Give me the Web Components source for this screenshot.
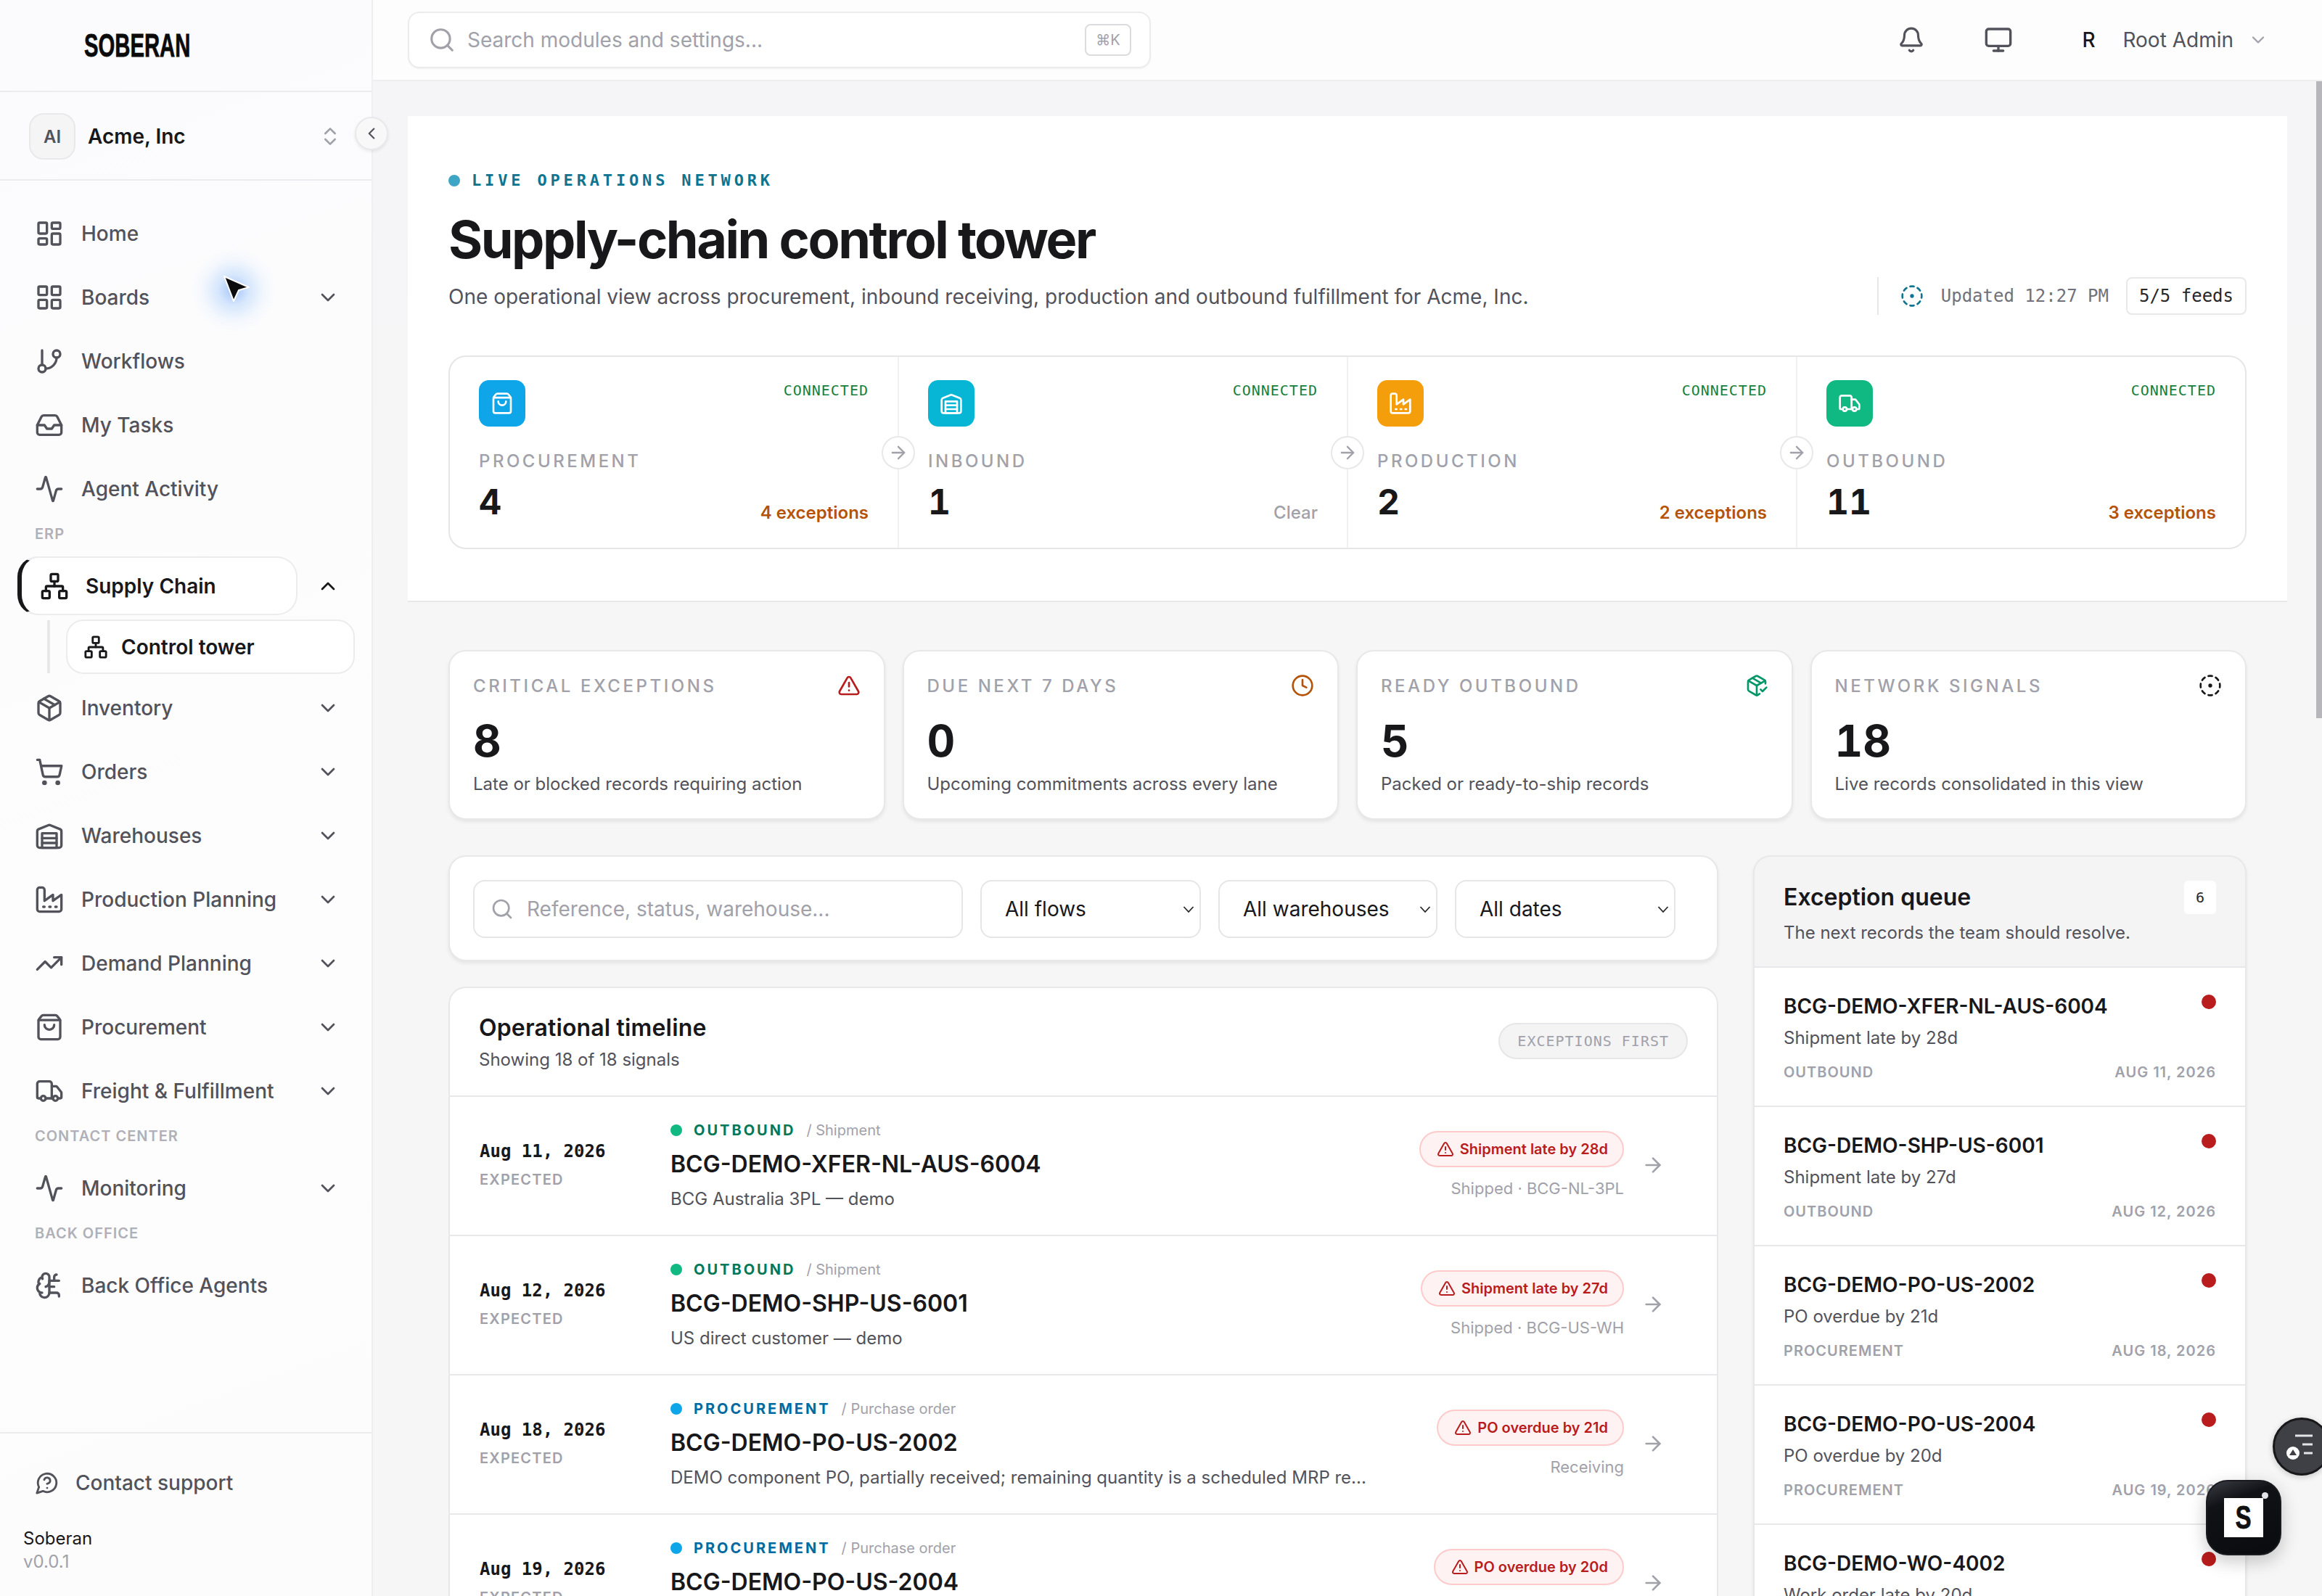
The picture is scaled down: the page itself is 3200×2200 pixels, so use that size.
<!doctype html>
<html lang="en"><head><meta charset="utf-8"><title>Supply-chain control tower</title>
<style>
html,body{margin:0;padding:0;height:2200px;overflow:hidden;background:#f6f6f7;font-family:Inter,"Liberation Sans",sans-serif;color:#18181b}
</style></head><body>
<app-root></app-root>
<script>
const I={
dash:'<rect x="3" y="3" width="7" height="9" rx="1"/><rect x="14" y="3" width="7" height="5" rx="1"/><rect x="14" y="12" width="7" height="9" rx="1"/><rect x="3" y="16" width="7" height="5" rx="1"/>',
grid:'<rect x="3" y="3" width="7" height="7" rx="1"/><rect x="14" y="3" width="7" height="7" rx="1"/><rect x="14" y="14" width="7" height="7" rx="1"/><rect x="3" y="14" width="7" height="7" rx="1"/>',
branch:'<line x1="6" y1="3" x2="6" y2="15"/><circle cx="18" cy="6" r="3"/><circle cx="6" cy="18" r="3"/><path d="M18 9a9 9 0 0 1-9 9"/>',
inbox:'<polyline points="22 12 16 12 14 15 10 15 8 12 2 12"/><path d="M5.45 5.11 2 12v6a2 2 0 0 0 2 2h16a2 2 0 0 0 2-2v-6l-3.45-6.89A2 2 0 0 0 16.76 4H7.24a2 2 0 0 0-1.79 1.11z"/>',
activity:'<path d="M22 12h-2.48a2 2 0 0 0-1.93 1.46l-2.35 8.36a.25.25 0 0 1-.48 0L9.24 2.18a.25.25 0 0 0-.48 0l-2.35 8.36A2 2 0 0 1 4.49 12H2"/>',
network:'<rect x="16" y="16" width="6" height="6" rx="1"/><rect x="2" y="16" width="6" height="6" rx="1"/><rect x="9" y="2" width="6" height="6" rx="1"/><path d="M5 16v-3a1 1 0 0 1 1-1h12a1 1 0 0 1 1 1v3"/><path d="M12 12V8"/>',
package:'<path d="M11 21.73a2 2 0 0 0 2 0l7-4A2 2 0 0 0 21 16V8a2 2 0 0 0-1-1.73l-7-4a2 2 0 0 0-2 0l-7 4A2 2 0 0 0 3 8v8a2 2 0 0 0 1 1.73z"/><path d="M12 22V12"/><polyline points="3.29 7 12 12 20.71 7"/><path d="m7.5 4.27 9 5.15"/>',
cart:'<circle cx="8" cy="21" r="1"/><circle cx="19" cy="21" r="1"/><path d="M2.05 2.05h2l2.66 12.42a2 2 0 0 0 2 1.58h9.78a2 2 0 0 0 1.95-1.57l1.65-7.43H5.12"/>',
warehouse:'<path d="M22 8.35V20a2 2 0 0 1-2 2H4a2 2 0 0 1-2-2V8.35A2 2 0 0 1 3.26 6.5l8-3.2a2 2 0 0 1 1.48 0l8 3.2A2 2 0 0 1 22 8.35Z"/><path d="M6 18h12"/><path d="M6 14h12"/><rect x="6" y="10" width="12" height="12"/>',
factory:'<path d="M2 20a2 2 0 0 0 2 2h16a2 2 0 0 0 2-2V8l-7 5V8l-7 5V4a2 2 0 0 0-2-2H4a2 2 0 0 0-2 2Z"/><path d="M17 18h1"/><path d="M12 18h1"/><path d="M7 18h1"/>',
trend:'<polyline points="22 7 13.5 15.5 8.5 10.5 2 17"/><polyline points="16 7 22 7 22 13"/>',
bag:'<path d="M16 10a4 4 0 0 1-8 0"/><path d="M3.103 6.034h17.794"/><path d="M3.4 5.467a2 2 0 0 0-.4 1.2V20a2 2 0 0 0 2 2h14a2 2 0 0 0 2-2V6.667a2 2 0 0 0-.4-1.2l-2-2.667A2 2 0 0 0 17 2H7a2 2 0 0 0-1.6.8z"/>',
truck:'<path d="M14 18V6a2 2 0 0 0-2-2H4a2 2 0 0 0-2 2v11a1 1 0 0 0 1 1h2"/><path d="M15 18H9"/><path d="M19 18h2a1 1 0 0 0 1-1v-3.65a1 1 0 0 0-.22-.624l-3.48-4.35A1 1 0 0 0 17.52 8H14"/><circle cx="17" cy="18" r="2"/><circle cx="7" cy="18" r="2"/>',
brain:'<path d="M12 5a3 3 0 1 0-5.997.125 4 4 0 0 0-2.526 5.77 4 4 0 0 0 .556 6.588A4 4 0 1 0 12 18Z"/><path d="M9 13a4.5 4.5 0 0 0 3-4"/><path d="M6.003 5.125A3 3 0 0 0 6.401 6.5"/><path d="M3.477 10.896a4 4 0 0 1 .585-.396"/><path d="M6 18a4 4 0 0 1-1.967-.516"/><path d="M12 13h4"/><path d="M12 18h6a2 2 0 0 1 2 2v1"/><path d="M12 8h8"/><path d="M16 8V5a2 2 0 0 1 2-2"/>',
help:'<path d="M7.9 20A9 9 0 1 0 4 16.1L2 22Z"/><path d="M9.09 9a3 3 0 0 1 5.83 1c0 2-3 3-3 3"/><path d="M12 17h.01"/>',
updown:'<path d="m7 15 5 5 5-5"/><path d="m7 9 5-5 5 5"/>',
down:'<path d="m6 9 6 6 6-6"/>',up:'<path d="m18 15-6-6-6 6"/>',left:'<path d="m15 18-6-6 6-6"/>',
search:'<circle cx="11" cy="11" r="8"/><path d="m21 21-4.3-4.3"/>',
bell:'<path d="M10.268 21a2 2 0 0 0 3.464 0"/><path d="M3.262 15.326A1 1 0 0 0 4 17h16a1 1 0 0 0 .74-1.673C19.41 13.956 18 12.499 18 8A6 6 0 0 0 6 8c0 4.499-1.411 5.956-2.738 7.326"/>',
monitor:'<rect x="2" y="3" width="20" height="14" rx="2"/><line x1="8" y1="21" x2="16" y2="21"/><line x1="12" y1="17" x2="12" y2="21"/>',
dashed:'<path d="M10.1 2.18a9.93 9.93 0 0 1 3.8 0"/><path d="M17.6 3.71a9.95 9.95 0 0 1 2.69 2.7"/><path d="M21.82 10.1a9.93 9.93 0 0 1 0 3.8"/><path d="M20.29 17.6a9.95 9.95 0 0 1-2.7 2.69"/><path d="M13.9 21.82a9.94 9.94 0 0 1-3.8 0"/><path d="M6.4 20.29a9.95 9.95 0 0 1-2.69-2.7"/><path d="M2.18 13.9a9.93 9.93 0 0 1 0-3.8"/><path d="M3.71 6.4a9.95 9.95 0 0 1 2.7-2.69"/><circle cx="12" cy="12" r="1"/>',
alert:'<path d="m21.73 18-8-14a2 2 0 0 0-3.48 0l-8 14A2 2 0 0 0 4 21h16a2 2 0 0 0 1.73-3"/><path d="M12 9v4"/><path d="M12 17h.01"/>',
clock:'<circle cx="12" cy="12" r="10"/><polyline points="12 6 12 12 16 14"/>',
pcheck:'<path d="m16 16 2 2 4-4"/><path d="M21 10V8a2 2 0 0 0-1-1.73l-7-4a2 2 0 0 0-2 0l-7 4A2 2 0 0 0 3 8v8a2 2 0 0 0 1 1.73l7 4a2 2 0 0 0 2 0l2-1.14"/><path d="m7.5 4.27 9 5.15"/><polyline points="3.29 7 12 12 20.71 7"/><line x1="12" y1="22" x2="12" y2="12"/>',
arrow:'<path d="M5 12h14"/><path d="m12 5 7 7-7 7"/>'
};
const ic=(n,s=40,c='currentColor',w=2)=>`<svg xmlns="http://www.w3.org/2000/svg" width="${s}" height="${s}" viewBox="0 0 24 24" fill="none" stroke="${c}" stroke-width="${w}" stroke-linecap="round" stroke-linejoin="round" style="flex:none;display:block">${I[n]}</svg>`;
const MONO='"DejaVu Sans Mono","Liberation Mono",monospace';
const def=(tag,css,render)=>customElements.define(tag,class extends HTMLElement{connectedCallback(){if(this.shadowRoot)return;const r=this.attachShadow({mode:'open'});r.innerHTML=`<style>${css}</style>`+render(this)}});
const a=(e,k,d='')=>e.getAttribute(k)??d;

def('nav-item',`
:host{display:flex;align-items:center;height:88px;padding-left:48px;padding-right:44px;color:#52525b;font-size:28px;font-weight:500}
span{margin-left:24px;flex:1;white-space:nowrap}
`,e=>`${ic(a(e,'icon'))}<span><slot></slot></span>${e.hasAttribute('more')?ic('down',32):''}`);

def('nav-label',`
:host{display:flex;align-items:center;height:36px;margin-bottom:10px;padding-left:48px;color:#b0b0b8;font-size:20px;font-weight:600;letter-spacing:1px;white-space:nowrap}
`,()=>`<slot></slot>`);

def('nav-active',`
:host{display:block;margin-top:13px}
.row{display:flex;align-items:center;height:81px;padding-right:44px}
.pill{box-sizing:border-box;width:386px;margin-left:24px;height:81px;display:flex;align-items:center;padding-left:25px;background:#fff;border:2px solid #ececee;border-left:6px solid #18181b;border-radius:28px;font-size:28px;font-weight:600;color:#18181b;white-space:nowrap}
.pill span{margin-left:23px}
.ch{margin-left:26px;color:#18181b}
.sub{display:flex;margin-top:6px;height:75px;margin-bottom:3px;padding-left:65px}
.line{width:4px;background:#e8e8ea;height:73px;margin-top:1px}
.c{box-sizing:border-box;margin-left:22px;width:398px;height:75px;display:flex;align-items:center;padding-left:22px;background:#fff;border:2px solid #ececee;border-radius:24px;font-size:28px;font-weight:600;color:#18181b;white-space:nowrap}
.c span{margin-left:18px}
`,()=>`<div class="row"><div class="pill">${ic('network',40)}<span>Supply Chain</span></div><div class="ch">${ic('up',32)}</div></div>
<div class="sub"><div class="line"></div><div class="c">${ic('network',34)}<span>Control tower</span></div></div>`);

def('side-bar',`
:host{position:relative;box-sizing:border-box;flex:none;width:514px;height:2200px;display:flex;flex-direction:column;background:linear-gradient(160deg,#fbfbfd,#fdfdfd 60%,#fcfcfc);border-right:2px solid #efeff1;z-index:3}
.logo{box-sizing:border-box;border-bottom:2px solid #ececee;height:127px;padding-left:116px;display:flex;align-items:center;padding-bottom:1px}
.logo b{font-family:"Liberation Sans",sans-serif;font-size:45px;font-weight:700;color:#0b0b0c;-webkit-text-stroke:.8px #0b0b0c;display:inline-block;line-height:1;transform:scaleX(.65);transform-origin:left center;white-space:nowrap}
.org{box-sizing:border-box;height:122px;border-bottom:2px solid #ececee;display:flex;align-items:center;padding-left:40px;padding-right:41px;padding-top:2px}
.av{box-sizing:border-box;width:64px;height:64px;border:2px solid #e9e9eb;background:#f5f5f6;border-radius:20px;display:flex;align-items:center;justify-content:center;font-size:24px;font-weight:600;color:#52525b}
.org span{margin-left:17px;flex:1;font-size:28px;font-weight:600;color:#18181b}
.collapse{position:absolute;left:489px;top:161px;box-sizing:border-box;width:46px;height:46px;border-radius:50%;background:#f8f8f9;border:2px solid #e9e9eb;box-shadow:0 2px 4px rgba(0,0,0,.08);display:flex;align-items:center;justify-content:center;color:#52525b}
nav{flex:1;padding-top:29px}
footer{height:226px;box-sizing:border-box;border-top:2px solid #ececee;padding:49px 0 0 32px}
.sup{display:flex;align-items:center;height:38px;color:#52525b;font-size:28px;font-weight:500;padding-left:16px}
.sup span{margin-left:22px}
.brand{font-size:24px;color:#18181b;margin-top:42px;line-height:32px}
.ver{font-size:24px;color:#a1a1aa;line-height:32px}
.cursor{position:absolute;left:262px;top:340px;width:120px;height:120px;border-radius:50%;background:radial-gradient(circle,rgba(59,130,246,.45) 0,rgba(96,165,250,.24) 25%,rgba(147,197,253,.08) 50%,transparent 68%)}
.cursor svg{position:absolute;left:45px;top:39px}
`,()=>`<div class="logo"><b>SOBERAN</b></div>
<div class="org"><div class="av">AI</div><span>Acme, Inc</span>${ic('updown',32,'#a1a1aa')}</div>
<div class="collapse">${ic('left',26)}</div>
<nav>
<nav-item icon="dash">Home</nav-item><nav-item icon="grid" more>Boards</nav-item><nav-item icon="branch">Workflows</nav-item><nav-item icon="inbox">My Tasks</nav-item><nav-item icon="activity">Agent Activity</nav-item>
<nav-label>ERP</nav-label><nav-active></nav-active>
<nav-item icon="package" more>Inventory</nav-item><nav-item icon="cart" more>Orders</nav-item><nav-item icon="warehouse" more>Warehouses</nav-item><nav-item icon="factory" more>Production Planning</nav-item><nav-item icon="trend" more>Demand Planning</nav-item><nav-item icon="bag" more>Procurement</nav-item><nav-item icon="truck" more>Freight &amp; Fulfillment</nav-item>
<nav-label>CONTACT CENTER</nav-label><nav-item icon="activity" more>Monitoring</nav-item>
<nav-label>BACK OFFICE</nav-label><nav-item icon="brain">Back Office Agents</nav-item>
</nav>
<footer><div class="sup">${ic('help',34)}<span>Contact support</span></div><div class="brand">Soberan</div><div class="ver">v0.0.1</div></footer>
<div class="cursor"><svg width="38" height="38" viewBox="0 0 38 38"><path d="M2 2 36 17 22 21 15 36Z" fill="#0c0c0e" stroke="#fff" stroke-width="2" stroke-linejoin="round"/></svg></div>`);

def('top-bar',`
:host{box-sizing:border-box;flex:none;height:112px;display:flex;align-items:center;background:#fdfdfe;border-bottom:2px solid #eeeef0;padding-left:48px;padding-bottom:1px;box-shadow:0 2px 6px rgba(0,0,0,.02)}
.s{box-sizing:border-box;width:1024px;height:78px;border:2px solid #ececee;border-radius:16px;background:#fff;box-shadow:0 1px 2px rgba(0,0,0,.05);display:flex;align-items:center;padding-left:26px;color:#a1a1aa;font-size:28px}
.s span{margin-left:16px;flex:1}
kbd{box-sizing:border-box;width:64px;height:44px;margin-right:25px;border:2px solid #dcdce0;border-radius:8px;display:flex;align-items:center;justify-content:center;font:400 20px Inter,sans-serif;color:#a1a1aa;background:#fff}
.r{margin-left:auto;display:flex;align-items:center;color:#52525b;font-size:28px}
.bell{margin-right:81px}.mon{margin-right:95px}
.R{color:#18181b;font-weight:500;width:56px;text-align:left}
.n{margin-right:20px;white-space:nowrap}
`,()=>`<div class="s">${ic('search',38)}<span>Search modules and settings...</span><kbd>⌘K</kbd></div>
<div class="r"><div class="bell">${ic('bell',38)}</div><div class="mon">${ic('monitor',40)}</div><div class="R">R</div><div class="n">Root Admin</div>${ic('down',28,'#a1a1aa')}<div style="width:74px"></div></div>`);

def('pipe-step',`
:host{position:relative;box-sizing:border-box;flex:1 1 0;padding:32px 40px 0;height:263px;border-right:2px solid #f1f1f3;min-width:0}
:host([last]){border-right:0}
.top{display:flex;justify-content:space-between}
.i{width:64px;height:64px;border-radius:14px;display:flex;align-items:center;justify-content:center}
.c{font:400 20px/28px ${MONO};letter-spacing:1px;color:#15803d}
.l{margin-top:33px;font-size:24px;line-height:30px;font-weight:500;letter-spacing:3.5px;color:#a1a1aa}
.b{margin-top:13px;display:flex;justify-content:space-between;align-items:flex-end}
.n{font-size:48px;line-height:56px;font-weight:700;color:#18181b;font-variant-numeric:tabular-nums;font-feature-settings:"tnum"}
.e{font-size:24px;line-height:30px;font-weight:600;margin-bottom:-2px}
.clear{font-weight:500}
.ar{position:absolute;right:-24px;top:109px;box-sizing:border-box;width:46px;height:46px;border-radius:50%;background:#fff;border:2px solid #e8e8ea;display:flex;align-items:center;justify-content:center;z-index:1}
`,e=>`<div class="top"><div class="i" style="background:${a(e,'color')}">${ic(a(e,'icon'),32,'#fff')}</div><div class="c">CONNECTED</div></div>
<div class="l">${a(e,'label')}</div>
<div class="b"><div class="n">${a(e,'num')}</div><div class="e ${a(e,'note')==='Clear'?'clear':''}" style="color:${a(e,'note')==='Clear'?'#a1a1aa':'#b45309'}">${a(e,'note')}</div></div>
${e.hasAttribute('last')?'':`<div class="ar">${ic('arrow',28,'#a1a1aa')}</div>`}`);

def('hero-panel',`
:host{display:block;box-sizing:border-box;background:#fff;border-bottom:2px solid #e8e8ea;height:670px;padding:75px 56px 0}
.live{display:flex;align-items:center;font:700 22px/28px ${MONO};letter-spacing:4.84px;color:#0e7490;white-space:nowrap}
.dot{width:16px;height:16px;border-radius:50%;background:#3ea5c4;margin-right:16px}
h1{margin:27px 0 0;font-size:72px;line-height:80px;font-weight:700;letter-spacing:-2.46px;color:#18181b}
.row{display:flex;justify-content:space-between;align-items:center;margin-top:12px;height:52px}
p{margin:0;padding-top:2px;font-size:28px;line-height:40px;color:#52525b}
.m{display:flex;align-items:center;font:400 24px/32px ${MONO};color:#71717a}
.d{width:2px;height:52px;background:#e8e8ea;margin-right:30px}
.m span{margin-left:24px}
.chip{box-sizing:border-box;height:52px;margin-left:24px;padding:0 16px;border:2px solid #e8e8ea;border-radius:8px;display:flex;align-items:center;color:#27272a}
.pipe{margin-top:56px;box-sizing:border-box;height:267px;border:2px solid #e6e6e8;border-radius:24px;display:flex}
`,()=>`<div class="live"><i class="dot"></i>LIVE OPERATIONS NETWORK</div>
<h1>Supply-chain control tower</h1>
<div class="row"><p>One operational view across procurement, inbound receiving, production and outbound fulfillment for Acme, Inc.</p>
<div class="m"><i class="d"></i>${ic('dashed',32,'#0e7490')}<span>Updated 12:27 PM</span><div class="chip">5/5 feeds</div></div></div>
<div class="pipe">
<pipe-step color="#0ea5e9" icon="bag" label="PROCUREMENT" num="4" note="4 exceptions"></pipe-step>
<pipe-step color="#06b6d4" icon="warehouse" label="INBOUND" num="1" note="Clear"></pipe-step>
<pipe-step color="#f59e0b" icon="factory" label="PRODUCTION" num="2" note="2 exceptions"></pipe-step>
<pipe-step color="#10b981" icon="truck" label="OUTBOUND" num="11" note="3 exceptions" last></pipe-step>
</div>`);

def('kpi-card',`
:host{display:block;box-sizing:border-box;height:234px;background:#fff;border:2px solid #e8e8ea;border-radius:24px;padding:32px 32px 0;box-shadow:0 3px 5px rgba(0,0,0,.07);min-width:0}
.t{display:flex;justify-content:space-between;align-items:center;height:30px}
.l{font-size:24px;font-weight:500;letter-spacing:3.55px;color:#a1a1aa;white-space:nowrap}
.n{margin-top:25px;font-size:60px;line-height:72px;font-weight:700;color:#18181b;font-variant-numeric:tabular-nums;font-feature-settings:"tnum"}
.d{margin-top:6px;font-size:24px;line-height:36px;color:#52525b;white-space:nowrap}
`,e=>`<div class="t"><div class="l">${a(e,'label')}</div>${ic(a(e,'icon'),32,a(e,'color'))}</div><div class="n">${a(e,'num')}</div><div class="d">${a(e,'desc')}</div>`);

def('filter-select',`
:host{box-sizing:border-box;height:80px;display:flex;align-items:center;border:2px solid #e6e6e8;border-radius:16px;padding:0 6px 0 32px;font-size:28px;color:#18181b;white-space:nowrap;background:#fff}
span{flex:1}
`,()=>`<span><slot></slot></span><svg width="18" height="18" viewBox="0 0 18 18" fill="none" stroke="#27272a" stroke-width="1.8" style="flex:none"><path d="m2.5 6 6.5 7 6.5-7"/></svg>`);

def('filter-bar',`
:host{display:flex;box-sizing:border-box;height:146px;align-items:center;gap:24px;padding:1px 32px 0;background:#fff;border:2px solid #e8e8ea;border-radius:24px;box-shadow:0 3px 5px rgba(0,0,0,.07)}
.in{box-sizing:border-box;width:675px;height:80px;border:2px solid #e6e6e8;border-radius:16px;display:flex;align-items:center;padding-left:22px;color:#a1a1aa;font-size:28px;white-space:nowrap}
.in span{margin-left:18px}
`,()=>`<div class="in">${ic('search',32)}<span>Reference, status, warehouse...</span></div>
<filter-select style="width:304px">All flows</filter-select><filter-select style="width:302px">All warehouses</filter-select><filter-select style="width:304px">All dates</filter-select>`);

def('time-row',`
:host{display:flex;box-sizing:border-box;height:192px;border-bottom:2px solid #e8e8ea;padding-left:41px;padding-right:72px}
.date{width:263px;flex:none;padding-top:60px}
.dv{font:700 24px/30px ${MONO};color:#18181b;white-space:nowrap}
.ex{margin-top:11px;font-size:20px;line-height:26px;font-weight:600;letter-spacing:1.2px;color:#a1a1aa}
.main{flex:1;padding-top:31px;min-width:0}
.top{display:flex;align-items:center;height:30px;white-space:nowrap}
.top i{width:16px;height:16px;border-radius:50%;margin-right:16px}
.fl{font:700 20px/30px Inter,sans-serif;letter-spacing:3px}
.ty{font-size:20px;color:#a1a1aa;margin-left:15px}
.ti{margin-top:10px;font-size:32px;line-height:44px;font-weight:600;color:#18181b;white-space:nowrap}
.sb{margin-top:10px;font-size:24px;line-height:32px;color:#52525b;white-space:nowrap}
.r{flex:none;display:flex;flex-direction:column;align-items:flex-end;padding-top:47px}
.bd{box-sizing:border-box;height:50px;border:2px solid #fecaca;background:#fef2f2;border-radius:25px;display:flex;align-items:center;padding:0 20px 0 22px;font-size:20px;font-weight:600;color:#b91c1c;white-space:nowrap}
.bd span{margin-left:8px}
.mt{margin-top:14px;font-size:22px;line-height:30px;color:#a1a1aa;white-space:nowrap}
.go{flex:none;margin-left:24px;margin-top:78px}
`,e=>`<div class="date"><div class="dv">${a(e,'date')}</div><div class="ex">EXPECTED</div></div>
<div class="main"><div class="top"><i style="background:${a(e,'dot')}"></i><span class="fl" style="color:${a(e,'fc')}">${a(e,'flow')}</span><span class="ty">/ ${a(e,'type')}</span></div>
<div class="ti">${a(e,'ref')}</div>${a(e,'sub')?`<div class="sb">${a(e,'sub')}</div>`:''}</div>
<div class="r"><div class="bd">${ic('alert',24)}<span>${a(e,'bad')}</span></div>${a(e,'meta')?`<div class="mt">${a(e,'meta')}</div>`:''}</div>
<div class="go">${ic('arrow',32,'#a1a1aa')}</div>`);

def('time-line',`
:host{display:block;margin-top:35px;background:#fff;border:2px solid #e8e8ea;border-bottom:0;border-radius:24px 24px 0 0;overflow:hidden}
.h{box-sizing:border-box;height:150px;border-bottom:2px solid #e8e8ea;padding:0 40px 0 40px;display:flex;justify-content:space-between;align-items:flex-start}
h2{margin:34px 0 0;font-size:32px;line-height:42px;font-weight:600;color:#18181b;letter-spacing:.15px}
.h p{margin:6px 0 0;font-size:24px;line-height:34px;color:#52525b}
.ch{margin-top:48px;box-sizing:border-box;height:50px;padding:0 24px;border:2px solid #e6e6e8;background:#f4f4f5;border-radius:25px;display:flex;align-items:center;font:500 20px ${MONO};letter-spacing:1px;color:#a1a1aa;white-space:nowrap}
`,()=>`<div class="h"><div><h2>Operational timeline</h2><p>Showing 18 of 18 signals</p></div><div class="ch">EXCEPTIONS FIRST</div></div>
<time-row date="Aug 11, 2026" dot="#10b981" fc="#047857" flow="OUTBOUND" type="Shipment" ref="BCG-DEMO-XFER-NL-AUS-6004" sub="BCG Australia 3PL — demo" bad="Shipment late by 28d" meta="Shipped · BCG-NL-3PL"></time-row>
<time-row date="Aug 12, 2026" dot="#10b981" fc="#047857" flow="OUTBOUND" type="Shipment" ref="BCG-DEMO-SHP-US-6001" sub="US direct customer — demo" bad="Shipment late by 27d" meta="Shipped · BCG-US-WH"></time-row>
<time-row date="Aug 18, 2026" dot="#0ea5e9" fc="#0369a1" flow="PROCUREMENT" type="Purchase order" ref="BCG-DEMO-PO-US-2002" sub="DEMO component PO, partially received; remaining quantity is a scheduled MRP re..." bad="PO overdue by 21d" meta="Receiving"></time-row>
<time-row date="Aug 19, 2026" dot="#0ea5e9" fc="#0369a1" flow="PROCUREMENT" type="Purchase order" ref="BCG-DEMO-PO-US-2004" bad="PO overdue by 20d"></time-row>`);

def('queue-row',`
:host{display:block;box-sizing:border-box;height:192px;border-bottom:2px solid #e8e8ea;background:#fff;padding:33px 40px 0 40px}
.t{display:flex;justify-content:space-between}
.ti{font-size:28px;line-height:40px;font-weight:600;color:#18181b;white-space:nowrap}
.t i{width:20px;height:20px;border-radius:50%;background:#b91c1c;margin-top:4px}
.s{margin-top:8px;font-size:24px;line-height:32px;color:#52525b}
.m{margin-top:18px;display:flex;justify-content:space-between;font-size:20px;line-height:26px;font-weight:600;letter-spacing:1px;color:#a1a1aa}
`,e=>`<div class="t"><div class="ti">${a(e,'ref')}</div><i></i></div><div class="s">${a(e,'sub')}</div>${a(e,'flow')?`<div class="m"><span>${a(e,'flow')}</span><span>${a(e,'date')}</span></div>`:''}`);

def('queue-panel',`
:host{display:block;box-sizing:border-box;background:#f4f4f5;border:2px solid #e8e8ea;border-bottom:0;border-radius:24px 24px 0 0;box-shadow:0 3px 5px rgba(0,0,0,.07);overflow:hidden}
.h{box-sizing:border-box;height:153px;border-bottom:2px solid #e8e8ea;padding:33px 40px 0;position:relative}
h2{margin:0;font-size:32px;line-height:46px;font-weight:600;color:#18181b}
p{margin:4px 0 0;font-size:24px;line-height:44px;color:#52525b}
.c{position:absolute;right:40px;top:33px;width:44px;height:46px;background:#fff;border-radius:6px;display:flex;align-items:center;justify-content:center;font:400 20px ${MONO};color:#27272a}
`,()=>`<div class="h"><h2>Exception queue</h2><p>The next records the team should resolve.</p><div class="c">6</div></div>
<queue-row ref="BCG-DEMO-XFER-NL-AUS-6004" sub="Shipment late by 28d" flow="OUTBOUND" date="AUG 11, 2026"></queue-row>
<queue-row ref="BCG-DEMO-SHP-US-6001" sub="Shipment late by 27d" flow="OUTBOUND" date="AUG 12, 2026"></queue-row>
<queue-row ref="BCG-DEMO-PO-US-2002" sub="PO overdue by 21d" flow="PROCUREMENT" date="AUG 18, 2026"></queue-row>
<queue-row ref="BCG-DEMO-PO-US-2004" sub="PO overdue by 20d" flow="PROCUREMENT" date="AUG 19, 2026"></queue-row>
<queue-row ref="BCG-DEMO-WO-4002" sub="Work order late by 20d"></queue-row>`);

def('float-tools',`
:host{position:absolute;left:0;top:0;width:0;height:0;z-index:5}
.a{position:absolute;left:3132px;top:1954px;box-sizing:border-box;width:80px;height:80px;border-radius:50%;background:#3f3f46;border:3px solid #18181b;box-shadow:0 2px 8px rgba(0,0,0,.2)}
.a svg{position:absolute;left:14px;top:18px}
.b{position:absolute;left:3040px;top:2040px;box-sizing:border-box;width:104px;height:104px;border-radius:30px;background:linear-gradient(160deg,#3a3d44 0,#101216 28%,#0a0b0e 100%);border:2px solid #1a1b1f;box-shadow:0 8px 24px rgba(0,0,0,.22)}
.s{position:absolute;left:23px;top:23px;width:54px;height:54px;background:#fff;display:flex;align-items:center;justify-content:center;font-family:"Liberation Sans",sans-serif;font-weight:700;font-size:44px;color:#111}
.s b{display:inline-block;transform:scaleX(.74);-webkit-text-stroke:1px #111}
.d{position:absolute;left:75px;top:15px;width:9px;height:9px;border-radius:50%;background:#e4e4e7}
`,()=>`<div class="a"><svg width="54" height="42" viewBox="0 0 54 42" fill="none"><circle cx="11" cy="28" r="9" fill="#fff"/><path d="M11 23l5 8H6z" fill="#3f3f46"/><path d="M14 4h24M24 16h14M26 28h12" stroke="#e4e4e7" stroke-width="3"/></svg></div>
<div class="b"><div class="s"><b>S</b></div><div class="d"></div></div>`);

def('app-root',`
:host{display:flex;position:relative;width:3200px;height:2200px;overflow:hidden;background:#f6f6f7}
.col{flex:1;min-width:0;display:flex;flex-direction:column;height:2200px}
.scroll{position:relative;flex:1;overflow:hidden;padding:48px 48px 0 48px;background:linear-gradient(180deg,#f5f5f8,#f6f6f6 30%)}
.kp{display:grid;grid-template-columns:repeat(4,1fr);gap:24px;padding:0 56px;margin-top:66px}
.g{display:grid;grid-template-columns:1fr 680px;gap:48px;padding:0 56px;margin-top:49px;align-items:start}
.bar{position:absolute;right:0;top:0;width:8px;height:878px;background:#b7b7bb}
`,()=>`<side-bar></side-bar><div class="col"><top-bar></top-bar><div class="scroll"><div class="bar"></div>
<hero-panel></hero-panel>
<div class="kp">
<kpi-card label="CRITICAL EXCEPTIONS" icon="alert" color="#b91c1c" num="8" desc="Late or blocked records requiring action"></kpi-card>
<kpi-card label="DUE NEXT 7 DAYS" icon="clock" color="#b45309" num="0" desc="Upcoming commitments across every lane"></kpi-card>
<kpi-card label="READY OUTBOUND" icon="pcheck" color="#059669" num="5" desc="Packed or ready-to-ship records"></kpi-card>
<kpi-card label="NETWORK SIGNALS" icon="dashed" color="#18181b" num="18" desc="Live records consolidated in this view"></kpi-card>
</div>
<div class="g"><div><filter-bar></filter-bar><time-line></time-line></div><queue-panel></queue-panel></div>
</div></div><float-tools></float-tools>`);
</script></body></html>
